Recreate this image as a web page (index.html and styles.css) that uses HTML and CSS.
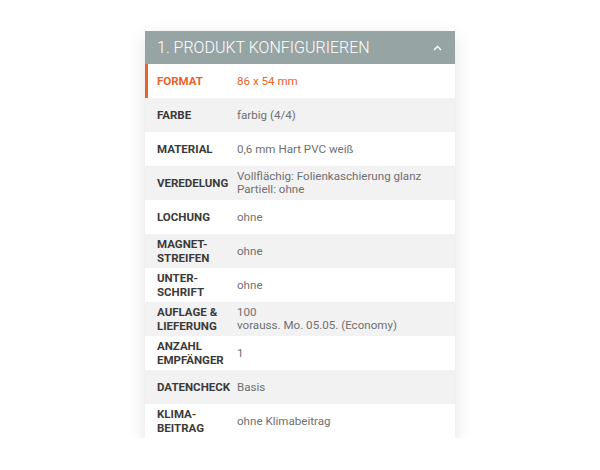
FILE: index.html
```html
<!DOCTYPE html>
<html lang="de">
<head>
<meta charset="utf-8">
<link rel="stylesheet" href="styles.css">
</head>
<body>
<div class="panel">
  <div class="head">
    <span class="title">1. PRODUKT KONFIGURIEREN</span>
    <svg class="chev" width="9" height="6" viewBox="0 0 9 6"><path d="M1 5 L4.5 1.5 L8 5" fill="none" stroke="#fff" stroke-width="1.4"/></svg>
  </div>
  <div class="row active"><div class="lab">FORMAT</div><div class="val">86 x 54 mm</div></div>
  <div class="row alt"><div class="lab">FARBE</div><div class="val">farbig (4/4)</div></div>
  <div class="row"><div class="lab">MATERIAL</div><div class="val">0,6 mm Hart PVC weiß</div></div>
  <div class="row alt"><div class="lab">VEREDELUNG</div><div class="val">Vollflächig: Folienkaschierung glanz<br>Partiell: ohne</div></div>
  <div class="row"><div class="lab">LOCHUNG</div><div class="val">ohne</div></div>
  <div class="row alt"><div class="lab">MAGNET-<br>STREIFEN</div><div class="val">ohne</div></div>
  <div class="row"><div class="lab">UNTER-<br>SCHRIFT</div><div class="val">ohne</div></div>
  <div class="row alt"><div class="lab">AUFLAGE &amp;<br>LIEFERUNG</div><div class="val">100<br>vorauss. Mo. 05.05. (Economy)</div></div>
  <div class="row"><div class="lab">ANZAHL<br>EMPFÄNGER</div><div class="val">1</div></div>
  <div class="row alt"><div class="lab">DATENCHECK</div><div class="val">Basis</div></div>
  <div class="row"><div class="lab">KLIMA-<br>BEITRAG</div><div class="val">ohne Klimabeitrag</div></div>
</div>
</body>
</html>
```
FILE: styles.css
```css
html, body { margin: 0; padding: 0; background: #fff; }
body { font-family: Roboto, "Liberation Sans", sans-serif; }
.panel {
  width: 310px;
  margin: 31px auto 0;
  box-shadow: 0 6px 18px rgba(0,0,0,0.12);
}
.head {
  height: 33px;
  background: #97a4a4;
  color: #fff;
  display: flex;
  align-items: center;
  justify-content: space-between;
  padding: 0 12px;
}
.title { font-size: 16px; font-weight: 300; }
.chev { margin-right: 1px; }
.row {
  height: 34px;
  display: flex;
  align-items: center;
  padding-left: 12px;
  background: #fff;
}
.row.alt { background: #f2f2f2; }
.row.active { border-left: 3px solid #e8632a; padding-left: 9px; }
.lab {
  width: 80px;
  flex: none;
  font-size: 11.5px;
  font-weight: 700;
  color: #3a3a3a;
  line-height: 14px;
}
.val {
  font-size: 11.6px;
  color: #707070;
  line-height: 13px;
}
.active .lab, .active .val { color: #e8632a; }
```
